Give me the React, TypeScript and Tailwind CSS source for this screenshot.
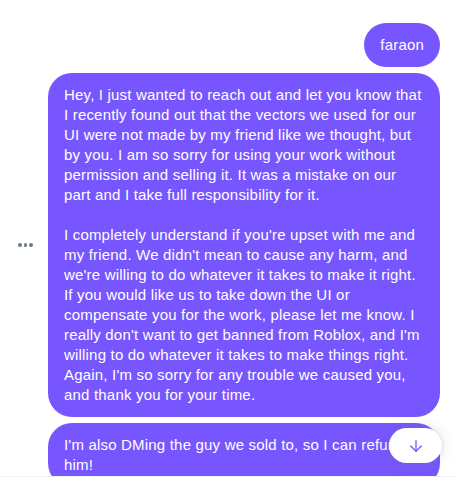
import { ArrowDown } from "lucide-react";

/* ================= DATA ================= */

const apology: string[] = [
  "Hey, I just wanted to reach out and let you know that",
  "I recently found out that the vectors we used for our",
  "UI were not made by my friend like we thought, but",
  "by you. I am so sorry for using your work without",
  "permission and selling it. It was a mistake on our",
  "part and I take full responsibility for it.",
  "",
  "I completely understand if you're upset with me and",
  "my friend. We didn't mean to cause any harm, and",
  "we're willing to do whatever it takes to make it right.",
  "If you would like us to take down the UI or",
  "compensate you for the work, please let me know. I",
  "really don't want to get banned from Roblox, and I'm",
  "willing to do whatever it takes to make things right.",
  "Again, I'm so sorry for any trouble we caused you,",
  "and thank you for your time.",
];

const followUp: string[] = [
  "I'm also DMing the guy we sold to, so I can refund",
  "him!",
];

/* ================= PARTS ================= */

function Lines({ lines }: { lines: string[] }) {
  return (
    <>
      {lines.map((l, i) => (
        <div key={i} className="h-5 whitespace-nowrap">
          {l || "\u00a0"}
        </div>
      ))}
    </>
  );
}

function MoreDots() {
  return (
    <div className="flex h-[34px] w-[34px] items-center justify-center gap-[2px]">
      <span className="h-[3.5px] w-[3.5px] rounded-full bg-[#6b7a87]" />
      <span className="h-[3.5px] w-[3.5px] rounded-full bg-[#6b7a87]" />
      <span className="h-[3.5px] w-[3.5px] rounded-full bg-[#6b7a87]" />
    </div>
  );
}

/* ================= APP ================= */

export default function App() {
  return (
    <div
      className="flex h-screen flex-col bg-white text-[15px] leading-5 tracking-[0.19px] text-white"
      style={{ fontFamily: '"Liberation Sans", Arial, sans-serif' }}
    >
      <div className="relative flex-1 overflow-hidden">
        <div className="flex flex-col items-end gap-[6px] pr-4 pt-[23px]">
          {/* my name */}
          <div className="rounded-3xl bg-[#7856ff] px-4 py-3">faraon</div>

          {/* long message */}
          <div className="flex w-full items-center">
            <div className="flex w-12 justify-center pl-[3px]">
              <MoreDots />
            </div>
            <div className="flex-1 rounded-3xl bg-[#7856ff] px-4 py-3">
              <Lines lines={apology} />
            </div>
          </div>

          {/* follow up */}
          <div className="flex w-full">
            <div className="w-12" />
            <div className="flex-1 rounded-3xl bg-[#7856ff] px-4 py-3">
              <Lines lines={followUp} />
            </div>
          </div>
        </div>

        {/* jump to latest */}
        <button className="absolute left-[389px] top-[428px] flex h-[35px] w-[53px] items-center justify-center rounded-full bg-white shadow-[0_0_15px_rgba(101,119,134,0.2),0_0_3px_1px_rgba(101,119,134,0.15)]">
          <ArrowDown size={18} strokeWidth={1.75} className="text-[#7856ff]" />
        </button>
      </div>

      {/* composer edge */}
      <div className="h-[5px] border-t border-[#eff3f4]" />
    </div>
  );
}
